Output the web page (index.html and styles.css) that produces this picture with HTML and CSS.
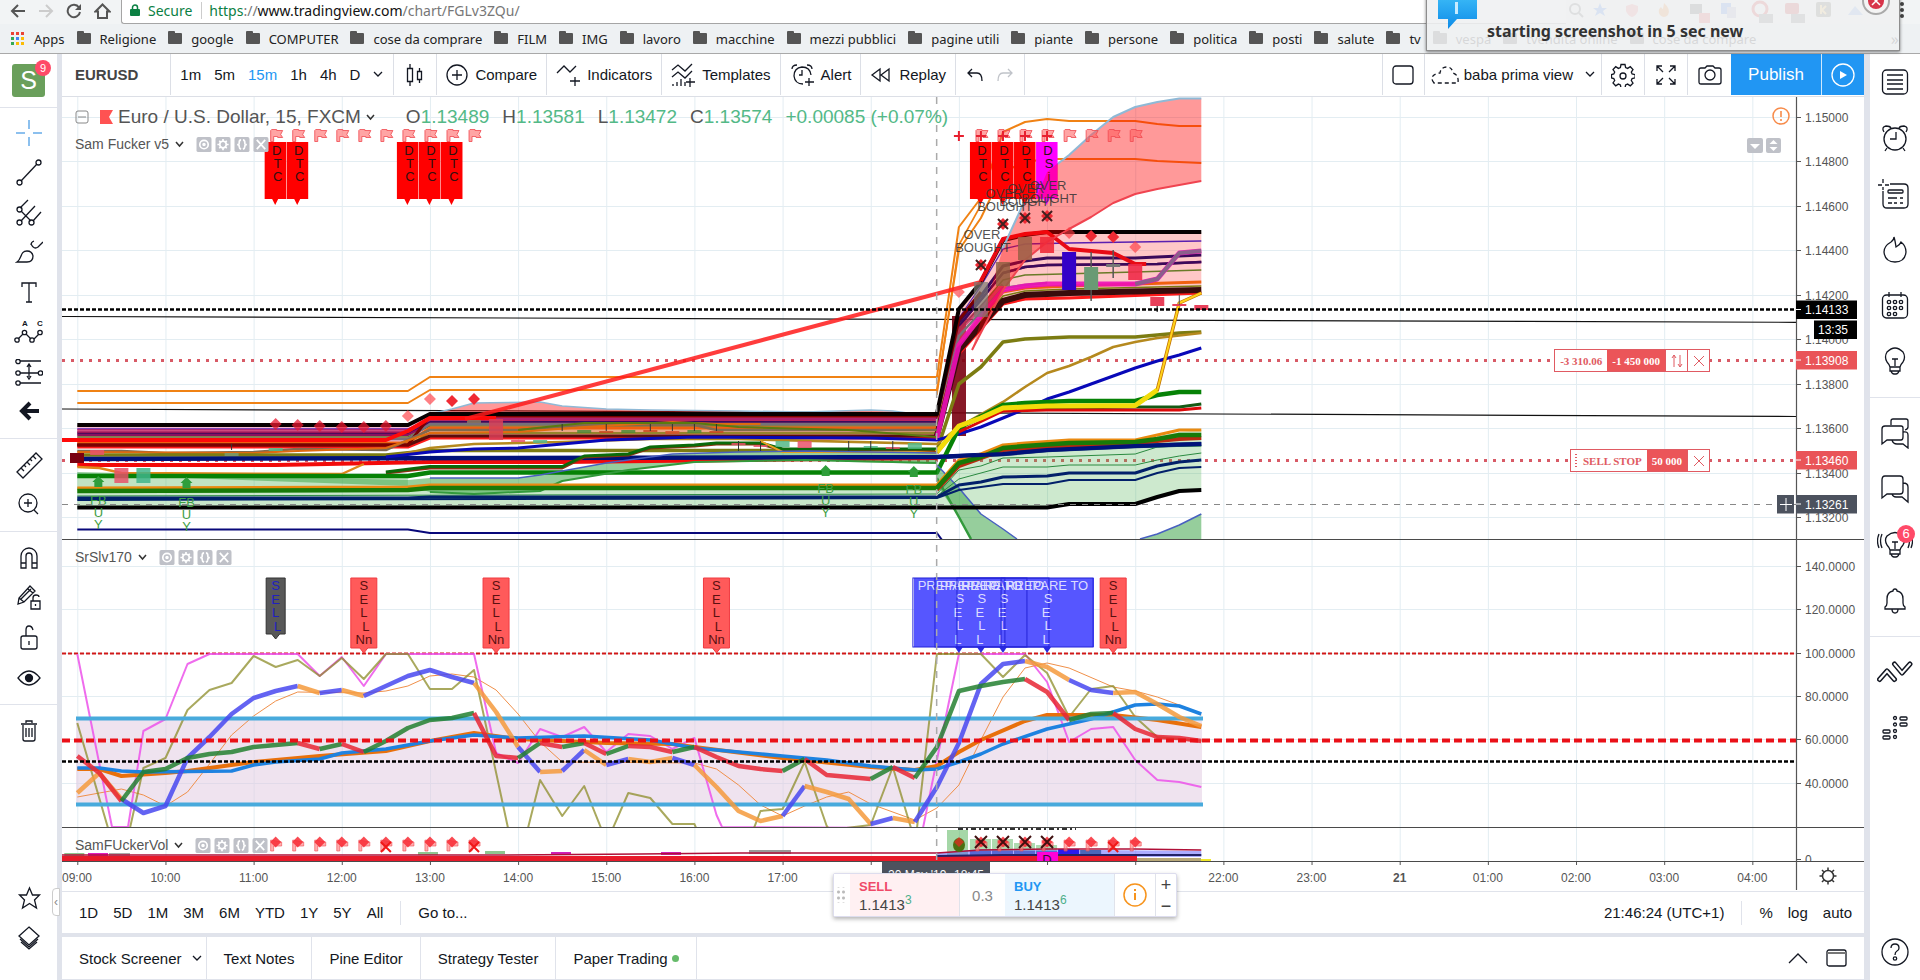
FILE: index.html
```html
<!DOCTYPE html>
<html lang="en">
<head>
<meta charset="utf-8">
<title>EURUSD chart</title>
<link rel="stylesheet" href="styles.css">
</head>
<body>
<div class="page">
  <header class="browser">
    <div class="address-row">
      <nav class="nav-icons">
        <button class="plain" aria-label="Back"><svg width="16" height="16" viewBox="0 0 16 16"><path d="M15 8H2M8 2L2 8l6 6" fill="none" stroke="#555" stroke-width="2"/></svg></button>
        <button class="plain" aria-label="Forward"><svg width="16" height="16" viewBox="0 0 16 16"><path d="M1 8h13M8 2l6 6-6 6" fill="none" stroke="#ccc" stroke-width="2"/></svg></button>
        <button class="plain" aria-label="Reload"><svg width="16" height="16" viewBox="0 0 16 16"><path d="M13 4.500A6.200 6.200 0 1 0 14 9" fill="none" stroke="#555" stroke-width="2"/><path d="M15 1v6H9z" fill="#555"/></svg></button>
        <button class="plain" aria-label="Home"><svg width="17" height="16" viewBox="0 0 17 16"><path d="M1.500 8.500L8.500 1.500l7 7H13V15H4V8.500z" fill="none" stroke="#555" stroke-width="2"/></svg></button>
      </nav>
      <div class="omnibox">
        <svg width="10" height="12" viewBox="0 0 10 12"><rect x="0" y="5" width="10" height="7" rx="1" fill="#0b8043"/><path d="M2.500 5V3.500a2.500 2.500 0 0 1 5 0V5" fill="none" stroke="#0b8043" stroke-width="1.500"/></svg>
        <span class="secure">Secure</span>
        <span class="url"><span class="green">https</span>://<span class="host">www.tradingview.com</span>/chart/FGLv3ZQu/</span>
      </div>
      <svg class="extensions" width="310" height="24" viewBox="0 0 310 24">
        <circle cx="9" cy="9" r="5" fill="none" stroke="#666" stroke-width="2"/><path d="M13 13l4 4" stroke="#666" stroke-width="2"/>
        <path d="M34 3l2 5h5l-4 3 2 5-5-3-5 3 2-5-4-3h5z" fill="#4285f4"/>
        <path d="M60 6l6-2 6 2v5q-2 5-6 6q-4-1-6-6z" fill="#f08080"/>
        <path d="M98 3q7 6 4 12q-4 4-8 0q-3-5 1-8q1 2 2 2z" fill="#f28b30"/>
        <rect x="124" y="4" width="12" height="10" fill="#555"/><rect x="133" y="13" width="11" height="10" fill="#e55"/>
        <rect x="155" y="3" width="10" height="11" fill="#4a86e8"/><rect x="161" y="7" width="9" height="11" fill="#aac"/>
        <circle cx="194" cy="9" r="7" fill="none" stroke="#d33" stroke-width="3"/><rect x="193" y="14" width="14" height="9" fill="#777"/>
        <rect x="219" y="3" width="14" height="11" rx="2" fill="#c33"/><rect x="225" y="14" width="14" height="9" fill="#777"/>
        <rect x="250" y="2" width="15" height="15" rx="2" fill="#665"/><path d="M255 5v9M260 6l-4 4 4 4" stroke="#fc6" stroke-width="2" fill="none"/>
        <path d="M282 15l7-9 8 9z" fill="#7aa7e8"/>
      </svg>
      <button class="plain dots" aria-label="Menu"><svg width="4" height="16" viewBox="0 0 4 16"><circle cx="2" cy="2" r="2" fill="#444"/><circle cx="2" cy="8" r="2" fill="#444"/><circle cx="2" cy="14" r="2" fill="#444"/></svg></button>
    </div>
    <nav class="bookmarks">
      <a href="#" class="apps"><svg width="14" height="14" viewBox="0 0 14 14"><path d="M0 0h3v3H0zM5 0h3v3H5zM10 0h3v3h-3z" fill="#ea4335"/><path d="M0 5h3v3H0z" fill="#34a853"/><path d="M5 5h3v3H5z" fill="#4285f4"/><path d="M10 5h3v3h-3zM10 10h3v3h-3zM5 10h3v3H5z" fill="#fbbc05"/><path d="M0 10h3v3H0z" fill="#34a853"/></svg>Apps</a>
      <a href="#"><i class="folder"></i>Religione</a><a href="#"><i class="folder"></i>google</a><a href="#"><i class="folder"></i>COMPUTER</a><a href="#"><i class="folder"></i>cose da comprare</a><a href="#"><i class="folder"></i>FILM</a><a href="#"><i class="folder"></i>IMG</a><a href="#"><i class="folder"></i>lavoro</a><a href="#"><i class="folder"></i>macchine</a><a href="#"><i class="folder"></i>mezzi pubblici</a><a href="#"><i class="folder"></i>pagine utili</a><a href="#"><i class="folder"></i>piante</a><a href="#"><i class="folder"></i>persone</a><a href="#"><i class="folder"></i>politica</a><a href="#"><i class="folder"></i>posti</a><a href="#"><i class="folder"></i>salute</a><a href="#"><i class="folder"></i>tv</a><a href="#"><i class="folder"></i>vespa</a><a href="#"><i class="folder"></i>tvendita online</a><a href="#"><i class="folder"></i>cose da compare</a>
      <span class="more">»</span>
    </nav>
    <div class="notice" role="status">
      <svg class="bubble" width="42" height="30" viewBox="0 0 42 30"><defs><linearGradient id="bub" x1="0" y1="0" x2="0" y2="1"><stop offset="0" stop-color="#35b4f5"/><stop offset="1" stop-color="#0d8be8"/></linearGradient></defs><path d="M1 0h39v19H20l-9 10v-10H1z" fill="url(#bub)"/><rect x="18" y="2" width="3" height="12" fill="#c8ebff"/></svg>
      <strong>starting screenshot in 5 sec new</strong>
      <button class="plain notice-close" aria-label="Close"><svg width="28" height="28" viewBox="0 0 28 28"><circle cx="14" cy="14" r="13" fill="#f4f4f4" stroke="#aaa" stroke-width="2"/><circle cx="14" cy="14" r="8" fill="#d8344a"/><path d="M10 10l8 8M18 10l-8 8" stroke="#fff" stroke-width="1.500"/></svg></button>
    </div>
  </header>

  <div class="app">
    <aside class="tools">
      <div class="avatar-box"><div class="avatar">S<span class="badge">9</span></div></div>
      <div class="group">
        <button aria-label="Crosshair"><svg width="28" height="28" viewBox="0 0 28 28"><path d="M14 1v9M14 18v9M1 14h9M18 14h9" stroke="#8cc0ee" stroke-width="2"/></svg></button>
        <button aria-label="Trend line"><svg width="28" height="28" viewBox="0 0 28 28"><path d="M6 22L22 5"/><circle cx="4.500" cy="23.500" r="2.500"/><circle cx="23.500" cy="3.500" r="2.500"/></svg></button>
        <button aria-label="Pitchfork"><svg width="28" height="28" viewBox="0 0 28 28"><path d="M5 9L13 1M6 22L20 7M18 22L26 13M6 12l10 10"/><circle cx="4.500" cy="10.500" r="2.500"/><circle cx="4.500" cy="23.500" r="2.500"/><circle cx="16.500" cy="23.500" r="2.500"/></svg></button>
        <button aria-label="Brush"><svg width="28" height="28" viewBox="0 0 28 28"><path d="M2 23C7 20 5 12 12 12q5 0 6 5q0 6-6 6zM16 5q3 6 7 3l5-5M19 2q-3 1-3 4"/></svg></button>
        <button aria-label="Text"><svg width="28" height="28" viewBox="0 0 28 28"><path d="M7 8V4h14v4M14 4v19M11 23h6"/></svg></button>
        <button aria-label="Pattern"><svg width="30" height="28" viewBox="0 0 30 28"><path d="M4 20l5-5M12 15l5 5M20 20l5-5"/><circle cx="3" cy="21" r="2.200"/><circle cx="10.500" cy="13.500" r="2.200"/><circle cx="18" cy="21" r="2.200"/><circle cx="26" cy="13.500" r="2.200"/><text x="8" y="7" class="tiny">A</text><text x="23" y="7" class="tiny">C</text></svg></button>
        <button aria-label="Forecast"><svg width="28" height="28" viewBox="0 0 28 28"><path d="M5 2h21M5 14h18M5 24h21M14 6v12M12 8l2-3 2 3M12 17l2 3 2-3"/><circle cx="3" cy="2.500" r="2.200"/><circle cx="3" cy="14" r="2.200"/><circle cx="25.500" cy="14" r="2.200"/><circle cx="3" cy="24" r="2.200"/></svg></button>
        <button aria-label="Back arrow"><svg width="28" height="28" viewBox="0 0 28 28"><path d="M24 12H9M15 4L7 12l8 8" stroke-width="4"/></svg></button>
      </div>
      <div class="group">
        <button aria-label="Ruler"><svg width="28" height="28" viewBox="0 0 28 28"><path d="M2 21L21 2l6 6L8 27zM6 17l3 3M9 14l2 2M12 11l3 3M15 8l2 2M18 5l3 3"/></svg></button>
        <button aria-label="Zoom"><svg width="28" height="28" viewBox="0 0 28 28"><circle cx="13" cy="12" r="9"/><path d="M9 12h8M13 8v8M19 19l4 4"/></svg></button>
      </div>
      <div class="group">
        <button aria-label="Magnet"><svg width="28" height="28" viewBox="0 0 28 28"><path d="M6 24V12a8 8 0 0 1 16 0v12h-5V12a3 3 0 0 0-6 0v12zM6 19h5M17 19h5"/></svg></button>
        <button aria-label="Draw lock"><svg width="28" height="28" viewBox="0 0 28 28"><path d="M3 20l1-6L15 2l5 5L9 18zM13 5l5 4M4 14l5 4M6 15L16 5M16 17h9v8h-9zM18 17v-3q0-3 3-3t3 2M20.500 20v2"/></svg></button>
        <button aria-label="Lock"><svg width="28" height="28" viewBox="0 0 28 28"><rect x="6" y="12" width="16" height="13" rx="2"/><path d="M11 12V6q0-4 3-4t4 4M14 17v4"/></svg></button>
        <button aria-label="Hide"><svg width="28" height="28" viewBox="0 0 28 28"><path d="M3 14q11-14 22 0q-11 14-22 0z"/><circle cx="14" cy="14" r="3.500" fill="#131722"/></svg></button>
      </div>
      <div class="group last">
        <button aria-label="Delete"><svg width="28" height="28" viewBox="0 0 28 28"><path d="M6 7h16M11 6V4h6v2M8 8v14q0 2 2 2h8q2 0 2-2V8M11 11v9M14 11v9M17 11v9"/></svg></button>
      </div>
      <div class="group bottom">
        <button aria-label="Favorites"><svg width="28" height="28" viewBox="0 0 28 28"><path d="M14.500 4l3 7h7l-5 5 2 8-7-4.500L7.500 24l2-8-5-5h7z"/></svg></button>
        <button aria-label="Objects"><svg width="28" height="28" viewBox="0 0 28 28"><path d="M14 3l10 9-10 9L4 12zM5 15l9 8 9-8M6 18l8 7 8-7"/></svg></button>
      </div>
    </aside>

    <main class="main">
      <div class="topbar">
        <button class="symbol">EURUSD</button>
        <div class="intervals"><button>1m</button><button>5m</button><button class="on">15m</button><button>1h</button><button>4h</button><button>D</button><button aria-label="More intervals"><svg width="10" height="8" viewBox="0 0 10 8"><path d="M1 1l4 4 4-4"/></svg></button></div>
        <button class="icon-only" aria-label="Chart type"><svg width="18" height="24" viewBox="0 0 18 24"><path d="M1.500 5.500h5v13h-5zM4 1v4M4 19v4M11.500 8.500h4v8h-4zM13.500 5v3M13.500 17v3"/></svg></button>
        <button class="labelled"><svg width="22" height="22" viewBox="0 0 22 22"><circle cx="11" cy="11" r="10"/><path d="M11 6v10M6 11h10"/></svg>Compare</button>
        <button class="labelled"><svg width="24" height="24" viewBox="0 0 24 24"><path d="M1 10l7-7 6 6 6-6M19 14v9M14 18h10"/></svg>Indicators</button>
        <button class="labelled"><svg width="24" height="24" viewBox="0 0 24 24"><path d="M1 7l6-5 7 6 7-7M1 14l6-5 7 6 7-7M2 21v2M6 19v4M10 16v7M14 19v4M19 15v9M15 19h9"/></svg>Templates</button>
        <button class="labelled"><svg width="24" height="24" viewBox="0 0 24 24"><path d="M13 21q-8 0-9-8q0-8 8-9q8 0 9 8M12 7v5H9M2 6q0-4 5-4M22 6q0-4-5-4M19 15v8M15 19h9"/></svg>Alert</button>
        <button class="labelled"><svg width="22" height="18" viewBox="0 0 22 18"><path d="M10 3v12L2 9zM19 3v12l-8-6z"/></svg>Replay</button>
        <div class="history"><button aria-label="Undo"><svg width="16" height="14" viewBox="0 0 16 14"><path d="M5 1L1 5l4 4M1 5h9q5 0 5 8"/></svg></button><button aria-label="Redo"><svg width="16" height="14" viewBox="0 0 16 14"><path d="M11 1l4 4-4 4M15 5H6Q1 5 1 13" stroke="#c0c3c9"/></svg></button></div>
        <span class="spacer"></span>
        <button class="icon-only" aria-label="Layout"><svg width="22" height="20" viewBox="0 0 22 20"><rect x="1" y="1" width="20" height="18" rx="3"/></svg></button>
        <button class="layout"><svg width="28" height="18" viewBox="0 0 28 18"><path d="M3 17q-5-6 2-9q2-1 4-1q1-6 7-6q5 0 6 6q6 2 5 10z" stroke-dasharray="4 3"/></svg>baba prima view<svg width="10" height="8" viewBox="0 0 10 8"><path d="M1 1l4 4 4-4"/></svg></button>
        <button class="icon-only" aria-label="Settings"><svg width="24" height="24" viewBox="0 0 24 24"><path d="M10 1.500h4l.6 3 2 .9 2.700-1.700 2.700 2.800-1.700 2.600.8 1.900 3 .6v3.300l-3 .6-.8 2 1.700 2.600-2.700 2.700-2.700-1.700-2 .9-.6 3h-4l-.6-3-2-.9-2.700 1.700L2 20l1.700-2.500-.9-2-2.300-.6v-3.300l2.300-.6.9-2L2 6.500l2.700-2.800 2.700 1.700 2-.9z"/><circle cx="12" cy="13" r="3"/></svg></button>
        <button class="icon-only" aria-label="Fullscreen"><svg width="20" height="20" viewBox="0 0 20 20"><path d="M1 6V1h5M1 1l6 6M14 1h5v5M19 1l-6 6M1 14v5h5M1 19l6-6M19 14v5h-5M19 19l-6-6"/></svg></button>
        <button class="icon-only noline" aria-label="Snapshot"><svg width="24" height="20" viewBox="0 0 24 20"><path d="M3 3h4l2-2h6l2 2h4q2 0 2 2v12q0 2-2 2H3q-2 0-2-2V5q0-2 2-2z"/><circle cx="12" cy="10" r="5"/></svg></button>
        <button class="publish">Publish</button>
        <button class="play" aria-label="Stream"><svg width="24" height="24" viewBox="0 0 24 24"><circle cx="12" cy="12" r="11" stroke="#fff"/><path d="M9 8v8l7-4z" fill="#fff" stroke="none"/></svg></button>
      </div>

      <section class="chart">
        <svg id="plot" viewBox="62 97 1802 793" preserveAspectRatio="xMinYMin meet"></svg>
        <div class="legend main-legend">
          <div class="title"><svg width="14" height="14" viewBox="0 0 14 14"><rect x="1" y="1" width="12" height="12" rx="2" fill="none" stroke="#888"/><path d="M3 7h8" stroke="#888"/></svg><svg width="13" height="14" viewBox="0 0 13 14"><path d="M0 0h13l-4 7 4 7H0z" fill="#ff5252"/></svg><span>Euro / U.S. Dollar, 15, FXCM</span><svg class="chev" width="9" height="7" viewBox="0 0 9 7"><path d="M1 1l3.500 4L8 1"/></svg>
          <span class="ohlc">O<b>1.13489</b></span><span class="ohlc">H<b>1.13581</b></span><span class="ohlc">L<b>1.13472</b></span><span class="ohlc">C<b>1.13574</b></span><b class="ohlc">+0.00085 (+0.07%)</b></div>
        </div>
        <div class="legend study one"><span>Sam Fucker v5</span><svg class="chev" width="9" height="7" viewBox="0 0 9 7"><path d="M1 1l3.500 4L8 1"/></svg><span class="mini" data-mini></span></div>
        <div class="legend study two"><span>SrSlv170</span><svg class="chev" width="9" height="7" viewBox="0 0 9 7"><path d="M1 1l3.500 4L8 1"/></svg><span class="mini" data-mini></span></div>
        <div class="legend study three"><span>SamFUckerVol</span><svg class="chev" width="9" height="7" viewBox="0 0 9 7"><path d="M1 1l3.500 4L8 1"/></svg><span class="mini" data-mini></span></div>

        <div class="order position"><span>-3 310.06</span><span class="solid">-1 450 000</span><button aria-label="Reverse"><svg width="12" height="14" viewBox="0 0 12 14"><path d="M3 13V1M1 4l2-3 2 3M9 1v12M7 10l2 3 2-3"/></svg></button><button aria-label="Close position"><svg width="12" height="12" viewBox="0 0 12 12"><path d="M1 1l10 10M11 1L1 11"/></svg></button></div>
        <div class="order stop"><span class="grip">SELL STOP</span><span class="solid">50 000</span><button aria-label="Cancel order"><svg width="12" height="12" viewBox="0 0 12 12"><path d="M1 1l10 10M11 1L1 11"/></svg></button></div>

        <div class="ticket">
          <span class="handle"></span>
          <button class="sell"><em>SELL</em><span>1.1413<sup>3</sup></span></button>
          <span class="spread">0.3</span>
          <button class="buy"><em>BUY</em><span>1.1413<sup>6</sup></span></button>
          <button class="info" aria-label="Info"><svg width="24" height="24" viewBox="0 0 24 24"><circle cx="12" cy="12" r="11"/><path d="M12 10v7M12 6v2" stroke-width="2"/></svg></button>
          <span class="steps"><button>+</button><button>−</button></span>
        </div>
      </section>

      <div class="rangebar">
        <button>1D</button><button>5D</button><button>1M</button><button>3M</button><button>6M</button><button>YTD</button><button>1Y</button><button>5Y</button><button>All</button>
        <span class="sep"></span><button>Go to...</button>
        <span class="spacer"></span>
        <span>21:46:24 (UTC+1)</span><span class="sep"></span><button>%</button><button>log</button><button>auto</button>
        <button class="drawer" aria-label="Hide toolbar">‹</button>
      </div>
      <div class="tabs">
        <button>Stock Screener<svg width="10" height="8" viewBox="0 0 10 8"><path d="M1 1l4 4 4-4"/></svg></button><button>Text Notes</button><button>Pine Editor</button><button>Strategy Tester</button><button>Paper Trading<i class="online"></i></button>
        <span class="spacer"></span>
        <button class="bare" aria-label="Open panel"><svg width="20" height="12" viewBox="0 0 20 12"><path d="M1 11l9-9 9 9"/></svg></button>
        <button class="bare" aria-label="Maximize panel"><svg width="21" height="18" viewBox="0 0 21 18"><rect x="1" y="1" width="19" height="16" rx="2"/><path d="M1 4h19" stroke="#777" stroke-width="2"/></svg></button>
      </div>
    </main>

    <aside class="widgets">
      <div class="group">
        <button aria-label="Watchlist"><svg width="28" height="28" viewBox="0 0 28 28"><rect x="1.500" y="2" width="25" height="24" rx="4"/><path d="M6 7h16M6 12h16M6 16h16M6 21h16"/></svg></button>
        <button aria-label="Alerts"><svg width="28" height="28" viewBox="0 0 28 28"><circle cx="14" cy="15" r="11"/><path d="M15 8v7H9M3 8Q0 3 5 2q4 0 5 2M25 8q3-5-2-6q-4 0-5 2M6 24l-2 3M22 24l2 3"/></svg></button>
        <button aria-label="News"><svg width="34" height="32" viewBox="0 0 34 32"><path d="M12 6h14q4 0 4 4v16q0 4-4 4H9q-4 0-4-4V13M0 7h4M7 7h4M5 1v4M5 9v3"/><rect x="10" y="12" width="15" height="3" rx="1"/><path d="M10 20h9M22 20h3M10 25h4M16 25h3M22 25h3"/></svg></button>
        <button aria-label="Hotlist"><svg width="28" height="28" viewBox="0 0 28 28"><path d="M13 1q1 3 2 10q4-2 5-5q5 4 5 10q-1 10-11 10q-10 0-11-10q0-6 7-10q3-2 3-5z"/></svg></button>
        <button aria-label="Calendar"><svg width="28" height="28" viewBox="0 0 28 28"><rect x="1.500" y="3" width="25" height="23" rx="4"/><path d="M8 0v5M20 0v5"/><g><circle cx="8" cy="10" r="1.700"/><circle cx="14" cy="10" r="1.700"/><circle cx="20" cy="10" r="1.700"/><circle cx="8" cy="16" r="1.700"/><circle cx="14" cy="16" r="1.700"/><circle cx="20" cy="16" r="1.700"/><circle cx="8" cy="22" r="1.700"/><circle cx="14" cy="22" r="1.700"/></g></svg></button>
        <button aria-label="Ideas"><svg width="28" height="30" viewBox="0 0 28 30"><path d="M9 20q-1-3-3-5Q3 10 6 5q8-8 16 0q3 5 0 10q-2 2-3 5zM9 20v4h10v-4M10 24q1 3 3 3h2q2 0 3-3M14 19v-7M11 12h6"/></svg></button>
      </div>
      <div class="group">
        <button aria-label="Public chats"><svg width="28" height="32" viewBox="0 0 28 32"><path d="M10 8V4q0-2 2-2h13q2 0 2 2v6q0 2-3 3M4 9h16q2 0 2 2v9q0 3-2 3H6l-5 4V12q0-3 3-3zM22 15q5-1 5 3v13l-5-4h-6q-4 0-5-4"/></svg></button>
        <button aria-label="Private chats"><svg width="28" height="30" viewBox="0 0 28 30"><path d="M4 2h15q3 0 3 3v12q0 3-3 3H6l-5 4V6q0-4 3-4zM22 9q5 0 5 4v15l-6-5h-6q-3 0-4-3"/></svg></button>
        <button aria-label="Idea stream"><svg width="36" height="30" viewBox="0 0 36 30"><path d="M13 20q-1-3-3-5Q7 10 10 6q8-7 16 0q3 4 0 9q-2 2-3 5zM13 20v4h10v-4M14 24q1 3 3 3h2q2 0 3-3M18 19v-7M15 12h6M5 4q-3 7 0 14M2 4q-3 7 0 14M31 4q3 7 0 14M34 4q3 7 0 14"/></svg><span class="badge">6</span></button>
        <button aria-label="Notifications"><svg width="28" height="28" viewBox="0 0 28 28"><path d="M4 22V20q2-1 2-4v-4q0-7 6-8q0-2 2-2t2 2q6 1 6 8v4q0 3 2 4v2zM11 22q0 4 3 4t3-4"/></svg></button>
      </div>
      <div class="group last">
        <button aria-label="Order panel"><svg width="36" height="22" viewBox="0 0 36 22"><path d="M2.500 18.500L10 10l7.500 8.500" stroke-width="5" stroke-linecap="round" stroke-linejoin="round"/><path d="M2.500 18.500L10 10l7.500 8.500" stroke="#fff" stroke-width="2" stroke-linecap="round"/><path d="M17.500 3L25 12l8-9" stroke-width="5" stroke-linecap="round" stroke-linejoin="round"/><path d="M17.500 3L25 12l8-9" stroke="#fff" stroke-width="2" stroke-linecap="round"/></svg></button>
        <button aria-label="Depth"><svg width="28" height="26" viewBox="0 0 28 26"><rect x="19" y="2" width="7" height="3" rx="1"/><rect x="19" y="8" width="7" height="3" rx="1"/><rect x="2" y="15" width="7" height="3" rx="1"/><rect x="2" y="21" width="7" height="3" rx="1"/><circle cx="14" cy="3" r="1.500"/><circle cx="14" cy="9.500" r="1.500"/><circle cx="14" cy="16" r="1.500"/><circle cx="14" cy="22" r="1.500"/></svg></button>
      </div>
      <div class="group bottom"><button aria-label="Help"><svg width="28" height="28" viewBox="0 0 28 28"><circle cx="14" cy="14" r="13"/><path d="M10 10q0-4 4-4t4 4q0 2-2 3t-2 4"/><circle cx="14" cy="20.500" r="1.700"/></svg></button></div>
    </aside>
  </div>
</div>
<script src="chart.js"></script>
</body>
</html>
```
FILE: styles.css
```css
* { box-sizing: border-box; }
body { margin: 0; font-family: "Liberation Sans", Arial, sans-serif; font-size: 15px; color: #131722; background: #fff; }
button { font: inherit; color: inherit; background: none; border: 0; padding: 0; margin: 0; display: flex; align-items: center; justify-content: center; }
.page { display: flex; flex-direction: column; min-height: 100vh; overflow: hidden; }
.spacer { flex: 1; }

.browser { position: relative; height: 54px; background: #eef1f3; border-bottom: 1px solid #a9a9a9; font-family: "Noto Sans", sans-serif; font-size: 13px; }
.address-row { display: flex; height: 24px; background: #f2f4f5; }
.nav-icons { display: flex; gap: 12px; align-items: center; height: 22px; padding: 0 10px 0 10px; }
.omnibox { flex: 1; display: flex; align-items: center; background: #fff; border: solid #a5a5a5; border-width: 0 0 1px 1px; border-radius: 0 0 0 3px; padding: 0 8px 3px; font-size: 14px; }
.secure { color: #0b8043; padding: 0 9px 0 8px; margin-right: 7px; border-right: 1px solid #ccc; line-height: 17px; }
.url { color: #777; }
.green { color: #0b8043; }
.host { color: #111; }
.extensions { margin-right: 24px; }
.dots { height: 20px; margin-right: 16px; }
.bookmarks { display: flex; align-items: center; gap: 12px; height: 29px; padding: 0 11px; white-space: nowrap; }
.bookmarks a { display: flex; align-items: center; gap: 9px; color: #222; text-decoration: none; }
.folder { width: 14px; height: 11px; background: #555; border-radius: 1px; position: relative; }
.folder::before { content: ""; position: absolute; left: 0; top: -2px; width: 7px; height: 4px; background: #555; border-radius: 1px; }
.more { margin-left: auto; padding-right: 10px; font-size: 16px; }
.notice { position: absolute; right: 20px; top: -4px; width: 474px; height: 55px; background: rgba(239, 240, 241, 0.88); border: 1px solid #8e8e8e; box-shadow: 0 1px 3px rgba(0, 0, 0, 0.5); display: flex; align-items: flex-end; padding: 0 0 9px 60px; font-size: 16px; color: #333; }
.notice strong { line-height: 20px; }
.bubble { position: absolute; left: 10px; top: 3px; }
.notice-close { position: absolute; right: 9px; top: -10px; }

.app { flex: 1; display: flex; background: #fff; }
.tools svg, .widgets svg, .topbar svg, .tabs svg { fill: none; stroke: #131722; stroke-width: 1.300; flex: none; }
.tools { width: 57px; flex: none; display: flex; flex-direction: column; }
.avatar-box { height: 54px; padding: 10px 12px; border-bottom: 1px solid #e0e3eb; }
.avatar { position: relative; width: 33px; height: 33px; background: #6a9f5b; color: #fff; border-radius: 3px; font-size: 25px; line-height: 33px; text-align: center; }
.badge { position: absolute; right: -6px; top: -4px; width: 16px; height: 16px; border-radius: 8px; background: #ff4a68; color: #fff; font-size: 11px; line-height: 16px; text-align: center; }
.group { padding: 6px 0; border-bottom: 1px solid #e0e3eb; }
.tools .group:nth-child(2) { padding: 5px 0; }
.tools button { width: 100%; height: 40px; }
.tools .tiny { font-size: 8px; font-weight: bold; fill: #131722; stroke: none; }
.group.last, .group.bottom { border-bottom: 0; }
.tools .group.bottom { margin-top: auto; padding-bottom: 22px; }
.widgets { width: 56px; flex: none; display: flex; flex-direction: column; border-left: 6px solid #e0e3eb; }
.widgets .group { padding: 0 0 7px; }
.widgets .group + .group { padding-top: 7px; }
.widgets button { position: relative; width: 100%; height: 56px; }
.widgets .badge { right: 5px; top: 8px; width: 18px; height: 18px; border-radius: 9px; font-size: 13px; line-height: 18px; }
.widgets .group.bottom { margin-top: auto; padding-bottom: 0; }

.main { flex: 1; min-width: 0; display: flex; flex-direction: column; border-left: 5px solid #e0e3eb; }
.topbar { display: flex; height: 43px; padding-bottom: 1px; border-bottom: 1px solid #dcdfe6; white-space: nowrap; }
.topbar > button, .topbar > div { border-right: 1px solid #dcdfe6; }
.symbol { padding: 0 32px 0 13px; font-weight: bold; color: #444; }
.intervals { display: flex; align-items: center; gap: 13px; padding: 0 10px 0 9px; }
.intervals .on { color: #2196f3; }
.icon-only { width: 43px; }
.labelled { gap: 7px; padding: 0 9px; }
.history { display: flex; gap: 14px; padding: 0 11px; }
.topbar > .icon-only.noline { border-right: 0; }
.history + .spacer + .icon-only { border-left: 1px solid #dcdfe6; }
.layout { gap: 5px; padding: 0 6px; }
.layout svg:last-child { margin-left: 7px; }
.topbar > .publish { width: 91px; background: #2196f3; color: #fff; font-size: 17px; border-color: #cfe8fc; }
.topbar > .play { width: 42px; background: #2196f3; border: 0; }

.chart { position: relative; flex: 1; min-height: 0; }
#plot { display: block; width: 100%; font-size: 12px; }
#plot .lbl { font-size: 13px; text-anchor: middle; }
.legend { position: absolute; left: 13px; display: flex; align-items: center; color: #555; white-space: nowrap; }
.legend b { font-weight: normal; color: #53b987; }
.chev { fill: none; stroke: #333; stroke-width: 1.500; }
.title { display: flex; align-items: center; font-size: 19px; gap: 5px; }
.title svg:first-child { margin-right: 6px; }
.ohlc { margin-left: 8px; }
.chev + .ohlc { margin-left: 26px; }
.main-legend { top: 9px; }
.study { font-size: 14px; gap: 6px; }
.one { top: 39px; }
.two { top: 452px; }
.three { top: 740px; }
.mini { display: flex; gap: 3px; margin-left: 6px; }
.order { position: absolute; right: 154px; display: flex; height: 23px; border: 1px solid #e05a62; background: #fff; color: #e05a62; font: bold 11px "Liberation Serif", serif; }
.order > * { display: flex; align-items: center; padding: 0 5px; }
.order .solid { background: #eb5559; color: #fff; }
.order button { width: 22px; padding: 0; border-left: 1px solid #e05a62; }
.order svg { fill: none; stroke: #e05a62; }
.position { top: 252px; }
.stop { top: 352px; }
.order .grip { padding-left: 12px; background: repeating-linear-gradient(#e05a62 0 1px, #fff 1px 3px) 4px 4px / 2px 14px no-repeat; }
.ticket { position: absolute; left: 771px; bottom: -26px; z-index: 2; display: flex; height: 44px; background: #fff; border: 1px solid #dde; border-radius: 2px; box-shadow: 0 2px 4px rgba(0, 0, 0, 0.3); color: #444; }
.handle { width: 16px; display: flex; background: radial-gradient(circle, #bbb 1px, transparent 2px) 4px 14px / 5px 6px; border: solid #fff; border-width: 13px 3px; }
.ticket button { border-right: 1px solid #e0e3eb; }
.sell, .buy { width: 110px; flex-direction: column; padding: 0 9px; line-height: 17px; }
.ticket .sell, .ticket .buy { align-items: flex-start; }
.ticket em { font-style: normal; font-size: 13px; font-weight: bold; color: #ef4a68; }
.ticket .buy em { color: #2196f3; }
.ticket .sell { background: #fff0f2; }
.ticket .buy { background: #ecf6fe; }
.ticket sup { font-size: 12px; line-height: 10px; color: #4caf8a; }
.spread { width: 45px; display: flex; align-items: center; justify-content: center; color: #888; }
.info { width: 41px; }
.info svg { fill: none; stroke: #f7941d; stroke-width: 1.500; }
.steps { width: 20px; display: flex; flex-direction: column; }
.ticket .steps button { flex: 1; border: 0; font-size: 18px; line-height: 18px; }
.steps button + button { border-top: 1px solid #e0e3eb; }
.rangebar { position: relative; display: flex; align-items: center; gap: 15px; height: 42px; padding: 0 12px 0 17px; border-top: 1px solid #e0e3eb; }
.sep { width: 1px; height: 24px; margin: 0 2px; background: #e0e3eb; }
.drawer { position: absolute; left: -10px; top: 0; width: 8px; height: 28px; margin-top: -4px; background: #fff; border: 1px solid #ccc; border-radius: 4px 0 0 4px; font-size: 12px; color: #888; }
.tabs { display: flex; height: 47px; border-top: 4px solid #e0e3eb; border-bottom: 1px solid #e0e3eb; }
.tabs button { padding: 0 17px; border-right: 1px solid #e0e3eb; }
.tabs button:first-child svg { margin: 2px -13px 0 10px; }
.online { width: 7px; height: 7px; border-radius: 4px; background: #66bb6a; margin-left: 4px; }
.tabs .bare { border: 0; padding: 0 9px; }
.tabs .bare:last-child { padding-right: 17px; }
```
FILE: chart.js
```js
const NS = 'http://www.w3.org/2000/svg';
const plot = document.getElementById('plot');
const X = i => 77.3 + 22.04 * i;
let layer = plot;
function el(tag, attrs, text) {
  const n = document.createElementNS(NS, tag);
  for (const k in attrs) n.setAttribute(k, attrs[k]);
  if (text !== undefined) n.textContent = text;
  layer.appendChild(n);
  return n;
}
// Points are "bar:y" or "xPixel:y" pairs.
function pts(s) {
  return s.trim().split(/\s+/).map(p => {
    const [a, y] = p.split(':');
    return (a[0] === 'x' ? +a.slice(1) : +X(+a).toFixed(1)) + ',' + y;
  }).join(' ');
}
const line = (s, c, w = 1, o = 1) => el('polyline', { points: pts(s), fill: 'none', stroke: c, 'stroke-width': w, 'stroke-opacity': o, 'stroke-linejoin': 'round' });
const area = (s, c, o = 1) => el('polygon', { points: pts(s), fill: c, 'fill-opacity': o });
const rect = (x, y, w, h, c, o = 1) => el('rect', { x, y, width: w, height: h, fill: c, 'fill-opacity': o });
const seg = (x1, y1, x2, y2, c, w = 1, dash = '', o = 1) => el('line', { x1, y1, x2, y2, stroke: c, 'stroke-width': w, 'stroke-dasharray': dash, 'stroke-opacity': o });
const label = (x, y, t, c, cls = 'lbl', o = 1) => el('text', { x, y, fill: c, class: cls, 'fill-opacity': o }, t);
function clip(id, y, h) {
  layer = plot;
  const c = el('clipPath', { id });
  layer = c;
  el('rect', { x: 62, y, width: 1734, height: h });
  layer = plot;
  layer = el('g', { 'clip-path': `url(#${id})` });
}

// Grid
const hours = [9, 10, 11, 12, 13, 14, 15, 16, 17, 18, 19, 20, 21, 22, 23, 24, 25, 26, 27, 28];
hours.forEach((h, k) => seg(X(k * 4) + 0.5, 97, X(k * 4) + 0.5, 861, '#e3edf2'));
const prices = [[117, '1.15000'], [161, '1.14800'], [206, '1.14600'], [250, '1.14400'], [295, '1.14200'], [339, '1.14000'], [384, '1.13800'], [428, '1.13600'], [473, '1.13400'], [517, '1.13200']];
const osc = [[566, '140.0000'], [609, '120.0000'], [653, '100.0000'], [696, '80.0000'], [739, '60.0000'], [783, '40.0000']];
[...prices, ...osc].forEach(p => seg(62, p[0] + 0.5, 1796, p[0] + 0.5, '#e3edf2'));

// Price pane
clip('pane1', 97, 442);
seg(62, 316.5, 1796, 322.3, '#111', 1.2);
seg(62, 409, 1796, 416.5, '#111', 1.2);
seg(62, 360.5, 1796, 360.5, '#d85a66', 3, '3 6');
seg(62, 460.5, 1796, 460.5, '#d85a66', 3, '3 6');

area('0:425 15:425 16:414 39:414 39:438 16:438 15:447 0:447', '#f08bb0', 0.6);
area('16:414 17:409 18:403 21:402 22:406 24:409 26:410 30:411 33:412 36:410 37:411 38:414 39:414 39:425 16:425', '#ff0000', 0.4);
line('16:414 17:409 18:403 21:402 22:406 24:409 26:410 30:411 33:412 36:410 37:411 38:414', '#8fb9d6', 1.5);
area('0:472 15:480 16:478 20:478 21:475 24:463 27:454 30:452 33:451 39:452 39:464 35:462 33:460 28:462 25:470 22:481 21:491 18:494 16:492 15:486 0:474', '#2e9d3a', 0.5);
area('0:487 39:486 39:508 0:508', '#4caf50', 0.3);
area('0:475 15:476 15:490 0:490', '#4caf50', 0.35);
area('16:430 20:430 23:424 28:424 39:430 39:437 16:437', '#e09a50', 0.6);

line('0:391 15:391 16:377 39:377 40:227 41:198 42:132 43:122 44:119 45:121 48:121 49:124 50:126 51:126', '#f08214', 2);
line('0:403 15:403 16:390 39:390 40:250 41:218 42:172 43:162 44:159 48:159 49:161 51:163', '#f08214', 2);
line('39:395 40:245 41:205', '#f08214', 1.6);
rect(952, 316, 14, 120, '#7a0010', 0.9);

// Bands of moving levels, from top down
const rise = (y0, y1, y2, ys, c, w, o) => line(`0:${y0} 15:${y0} 16:${y1} 39:${y1} ${ys}`, c, w, o);
area('39:414 40:309 41:282 42:240 44:232 51:232 51:295 44:297 42:304 40:352 39:438', '#ff7a7a', 0.42);
rise(429, 419, 0, '40:318 41:286 42:249 43:244 45:243 51:241', '#5a20b0', 1.3);
rise(433, 422, 0, '40:322 41:296 42:266 43:261 44:258 48:258 51:255', '#3a0a5a', 3);
rise(435, 424, 0, '40:326 41:300 42:273 43:267 44:265 49:264 51:262', '#8a1060', 2.4);
line('40:326 41:300 42:273 43:267 44:265 49:264 51:262', '#3a0a5a', 2.4);
rise(437, 426, 0, '40:330 41:306 42:280 43:275 48:272 51:270', '#6a7a28', 1.5);
rise(431, 419, 0, '40:330 42:285', '#c21858', 4, 0.7);
rise(439, 424, 0, '40:336 42:288 43:285 44:283', '#77707a', 2.4);
rise(443, 428, 0, '40:344 42:292 43:288 45:286 51:282', '#f06010', 3);
rise(445, 433, 0, '40:347 42:296 43:291 45:289 51:286', '#7a7a10', 1.5);
rise(447, 438, 0, '40:354 42:304 43:299 45:298 51:293', '#ff1a1a', 3);
rise(445, 436, 0, '', '#5a0c0c', 3);
line('39:436 40:350 42:301 43:295 45:293 51:290', '#3a0c0c', 6);
rise(445, 416, 0, '40:320 41:292', '#7a0000', 3);
rise(425, 414, 0, '40:309 41:282 42:240 43:235 44:232 51:232', '#080000', 4);
line('39:438 40:345 41:316 42:290 43:286 44:284 48:284 49:279 50:253 51:251', '#ee10b8', 5, 0.9);
line('48:284 49:279 50:253 51:251', '#7a6a84', 4, 0.85);
line('x62:440 14:440 15:431 16:418 19:418', '#ff0a0a', 4);
line('41:281 42:239 43:234 44:232 45:249 46:251 47:253 48:264 48.5:264', '#e80a14', 4);

line('0:451 2:451 4:453 8:452 10:449 14:450 16:430 20:430 23:425 28:425 29:430 39:430', '#806a50', 2.5);
line('0:452 8:453 10:451 14:448 16:433 20:432 23:427 27:422 29:424 31:424', '#e06a10', 2);
line('20:430 23:423 28:423 30:427 35:430 39:437', '#5a7a10', 2);
line('0:455 14:455 16:450.5 39:450.5 40:384 41:367 42:342 43:339 45:337 48:337 50:333 51:332', '#7c7c12', 3.5);
line('0:465 9:465 16:462 22:462 39:458', '#f20a0a', 4);
line('14:458 16:448 18:444 22:442 26:439 30:439 39:444 40:427 42:402 43:387 44:373 45:366 46:357 47:347 48:342 49:338 51:333', '#b5891e', 2.6);
line('0:459 39:457 40:456 42:454 44:450 48:446 51:444', '#00127a', 4.5);
line('14:457 16:452 18:449 20:448 24:440 28:437 36:438 39:440 40:434 41:427 42:418 43:409 44:399 45:392 46:384 47:376 48:368 49:361 50:355 51:348', '#0808b8', 3);
line('0:467 1:468 2:473 12:474 13:464', '#e0861a', 2.4);
line('14:473 16:468 22:468 23:457 25:455 26:448 28:446 29:444 31:444 32:450 39:451', '#8a3010', 3);
line('14:472 16:466.500 22:466.500 23:456 25:454 26:447 28:445 29:443 31:443 32:449 39:449', '#0a6a0a', 3);
line('31:441 32:452 38:452 39:453', '#e8a020', 2);
line('0:476 15:476 16:472.500 39:472.500 40:428 42:405 43:403 45:401 48:401 49:395 50:392 51:392', '#068206', 4.5);
line('42:409 48:407 50:407 51:404', '#145a14', 3);
line('40:432 42:411 44:410 50:410 51:408', '#dc0a0a', 3);
line('39:453 40:426 41:418 42:408 43:407 44:406 48:405.500 49:390 50:303 51:293', '#c07000', 3.5);
line('39:452 40:426 41:418 42:408 43:407 44:406 48:405.500 49:390', '#f2dc0a', 5);
line('49:390 50:303 51:293', '#ffd21a', 2);

area('39:486 40:464 42:448 44:443 48:441 50:432 51:430 51:490 50:491 49:497 48:504 45:504 44:508 39:508', '#4caf50', 0.28);
area('39:465 40:488 41:514 42:529 x1017:539 x971:539 40:517 39:485', '#2e9d3a', 0.5);
area('x1140:539 49:534 50:525 51:514 51:539', '#2e9d3a', 0.5);
line('39:465 40:488 41:514 42:529 x1017:539', '#4860c0', 1.5);
line('x1140:539 49:534 50:525 51:514', '#4860c0', 1.5);
line('39:478 40:517 x971:539', '#339a3c', 2.5);
line('16:478 20:478 21:475 24:463 27:454 30:452 33:451 39:453', '#4860c0', 1.4);
line('16:492 18:494 21:491 22:481 25:470 28:462 33:460 39:463', '#339a3c', 2);
line('0:488 15:487 16:485 39:485 40:460 41:454 42:445 43:443 45:440 48:440 49:435 50:430 51:430', '#ea8a10', 3);
line('39:490 40:466 42:450 44:447 48:443 50:439 51:438', '#b82a10', 4);
line('0:491 15:490 16:488 39:488 40:463 41:457 42:448 43:446 45:443 48:442 49:439 50:435 51:435', '#187a08', 4.5);
line('0:496 39:494 40:470 41:466 42:458 44:457 48:454 49:447 50:446 51:446', '#2a8a40', 1);
line('39:496 40:479 42:467 44:467 45:465 48:465 49:460 50:456 51:453', '#2a8a40', 1);
line('39:457 42:454 44:450 48:446 51:444', '#00127a', 4);
line('0:498 15:498 16:497 39:497 40:485 41:482 42:477 44:476 45:473 48:473 49:466 50:462 51:460', '#02206a', 3);
line('0:500 39:498 40:490 42:484 44:484 45:480 48:480 49:473 50:468 51:467', '#02206a', 2);
line('0:507.500 39:507.500 44:507.500 45:504 48:504 49:497 50:491 51:490', '#000', 4);
line('0:529.500 15:529.500 16:533 39:533 x942:540', '#08087a', 2);

// Candles before the spike
[[0.9, 450, 5, '#e8526a'], [2, 468, 15, '#e8526a'], [3, 468, 15, '#3fb58b'], [7, 453, 3, '#7a9a70'], [9, 448, 3, '#53b987'], [18, 420, 3, '#8a7a60'], [19, 419, 21, '#d84058'], [20, 440, 2, '#e8526a'], [21, 440, 3, '#53b987'], [23, 430, 3, '#4f8a3a'], [24, 431, 2, '#c84a20'], [25, 430, 3, '#4f8a3a'], [26, 430, 2, '#c84a20'], [27, 431, 3, '#d8502a'], [28, 430, 3, '#4f8a3a'], [29, 431, 2, '#c84a20'], [30, 443, 2, '#e8526a'], [31, 445, 2, '#e8526a'], [32, 441, 6, '#53b987'], [33, 441, 7, '#e8526a'], [36, 446, 2, '#53b987'], [37, 447, 2, '#e8526a'], [38, 443, 6, '#53b987']].forEach(([i, y, h, c]) => rect(X(i) - 7, y, 14, h, c, 0.85));

// Red cloud on the right
area('x972:350 42:248 43:200 44:172 45:155 46:135 47:117 48:107 49:102 50:98.500 51:98.500 51:181 49:189 48:194 47:203 46:217 45:229 44:242 43:260 42:290', '#ff0000', 0.4);
line('42:248 43:200 44:172 45:155 46:135 47:117 48:107 49:102 50:98.500 51:98.500', '#8fb9d6', 2);
line('x972:350 42:290 43:260 44:242 45:229 46:217 47:203 48:194 49:189 51:181', '#f04450', 2);
el('line', { x1: 465, y1: 419, x2: 981, y2: 282, stroke: '#ff1a1a', 'stroke-width': 4, 'stroke-opacity': 0.85 });
rect(70, 453, 14, 10, '#7a0010');
rect(X(41) - 7, 282, 14, 35, '#7a7a70', 0.7);
rect(X(42) - 7, 262, 14, 24, '#8a6040', 0.8);
rect(X(43) - 7, 237, 14, 23, '#a06048', 0.9);
rect(X(44) - 7, 237, 14, 16, '#f02a38', 0.9);
rect(X(45) - 7, 252, 14, 38, '#3400c8');
seg(X(46), 252, X(46), 301, '#555', 1.5); rect(X(46) - 7, 267, 14, 23, '#6a9a74');
seg(X(47), 250, X(47), 278, '#555', 1.5); rect(X(47) - 7, 264, 14, 3, '#777');
rect(X(48) - 7, 264, 14, 16, '#f02a48', 0.9);
seg(X(49), 297, X(49), 312, '#555', 1.5); rect(X(49) - 7, 297, 14, 9, '#e8405a');
rect(X(50) - 7, 304, 14, 2, '#e8405a'); seg(X(50), 295, X(50), 305, '#555');
rect(X(51) - 7, 305, 14, 5, '#e8405a');
[22, 24, 26, 27, 28, 29, 7].forEach(i => seg(X(i), i === 7 ? 444 : 424, X(i), i === 7 ? 450 : 431, '#333'));
[30, 31, 35, 36, 37].forEach(i => seg(X(i), 441, X(i), 451, '#333'));
seg(62, 309.5, 1796, 309.5, '#000', 2.4, '4 2');

const diamond = (x, y, c = '#f02a34', o = 1, r = 6) => el('path', { d: `M${x} ${y - r}l${r} ${r}l${-r} ${r}l${-r} ${-r}z`, fill: c, 'fill-opacity': o });
const cross = (x, y, c = '#402020', r = 5) => el('path', { d: `M${x - r} ${y - r}l${2 * r} ${2 * r}M${x + r} ${y - r}l${-2 * r} ${2 * r}`, stroke: c, 'stroke-width': 2 });
[[9, 424], [10, 425], [11, 426], [12, 427], [13, 427], [14, 426]].forEach(d => diamond(X(d[0]), d[1], '#e81830', 0.75));
[[15, 416], [16, 399], [40, 292], [45, 233], [48, 247]].forEach(d => diamond(X(d[0]), d[1], '#ff3a40', 0.65));
[[17, 401], [18, 399], [46, 236], [47, 237]].forEach(d => diamond(X(d[0]), d[1]));
[[41, 265], [42, 224], [43, 218], [44, 216]].forEach(d => { diamond(X(d[0]), d[1]); cross(X(d[0]), d[1]); });

const flag = (x, y, o = 0.55) => el('path', { d: `M${x - 5} ${y}v11h3v-5h4v1h5l-2-3l2-4h-6v-1h-5z`, fill: '#ff5a5a', 'fill-opacity': o, stroke: '#f04a50', 'stroke-opacity': 0.8 });
for (let i = 9; i < 19; i++) flag(X(i), 130.5);
for (let i = 41; i < 49; i++) flag(X(i), 130.5);
for (let i = 40; i < 45; i++) seg(X(i) - 5, 136, X(i) + 5, 136, '#e82030', 2), seg(X(i), 131, X(i), 141, '#e82030', 2);
function tag(i, letters, c) {
  const x = X(i);
  el('path', { d: `M${x - 11} 142h21.500v57h-8l-3 6l-3-6h-7.500z`, fill: c });
  [...letters].forEach((t, k) => label(x + (k ? 2 : 1), 155 + k * 13, t, '#301010'));
}
[9, 10, 15, 16, 17, 41, 42, 43].forEach(i => tag(i, 'DTC', '#ff0000'));
tag(44, 'DSi', '#ff00ff');
area('44:172 x1058:163 x1058:198 x1036:198', '#ff0000', 0.3);
[[41, 239], [42, 198], [43, 193], [44, 190]].forEach(([i, y]) => { label(X(i) + 1, y, 'OVER', '#333', 'lbl', 0.85); label(X(i) + 2, y + 13, 'BOUGHT', '#333', 'lbl', 0.85); });
[[1, 476, 505], [5, 477, 507], [34, 465, 493], [38, 466, 494]].forEach(([i, y, b]) => {
  const x = X(i) - 1;
  el('path', { d: `M${x} ${y}l6 6h-2v5h-8v-5h-2z`, fill: '#2f9e3b' });
  ['FB', 'U', 'Y'].forEach((t, k) => label(x, b + k * 12, t, '#3f9e45'));
});
seg(62, 504.5, 1796, 504.5, '#888', 1, '6 6');

// Oscillator pane
clip('pane2', 540, 287);
rect(76, 719, 1126, 86, '#e0c8e0', 0.5);
line('0:797 2:789 3:795 4:806 5:792 6:764 7:735 8:716 9:701 10:692 13:693 14:691 15:686 16:676 17:674 18:677 19:690 20:714 21:742 22:762 28:763 29:769 30:785 31:805 32:816 33:806 34:797 35:792 36:804 38:820 39:808 40:785 41:740 42:697 43:668 44:663 45:668 47:687 48:691 49:697 50:705 51:715', '#f0904a', 1);
seg(62, 653.5, 1796, 653.5, '#d01818', 2, '4 2');
line('0:654 x112:827 x128:827 3:731 4:719 5:664 6:654 10:654 11:676 12:657 13:686 14:654 18:654 19:753 20:763 21:729 22:737 23:727 24:752 25:734 26:736 27:749 28:738 29:815 x722:827 x923:828 39:760 40:654 43:654 44:682 45:742 46:729 47:727 48:760 49:780 50:782 51:787', '#ec52ea', 2, 0.85);
line('0:723 x108:828 x130:828 3:768 4:758 5:710 6:690 7:683 8:656 9:667 10:660 11:676 12:658 13:679 14:654 15:654 16:689 17:689 18:670 x508:828 x528:828 21:780 22:816 23:786 x601:828 x613:828 25:793 26:798 27:824 28:824 x697:830 x754:828 31:811 32:809 33:762 34:826 x830:830 36:825 37:767 x911:828 x917:828 39:654 41:654 42:677 43:655 44:673 45:717 46:689 47:686 48:717 49:737 50:739 51:741', '#8c8c28', 2, 0.75);
line('0:769 1:769 2:776 4:773 5:771 8:762 11:756 14:751 16:741 18:733 20:739 24:743 27:744 28:747 32:758 36:767 38:770 39:766 40:752 41:740 43:721 44:715 47:715 49:720 51:727', '#e8700c', 4);
line('0:768 1:768 2:771 3:772 7:771 8:765 9:762 11:759 12:753 14:749 16:741 18:735 20:738 23:736 26:740 28:748 32:756 34:760 36:766 38:770 39:769 40:762 41:754 42:744 44:729 46:719 48:705 49:704 50:706 51:714', '#1e82e0', 3.5);
seg(76, 718.5, 1203, 718.5, '#48aadc', 4);
seg(76, 804.5, 1203, 804.5, '#48aadc', 4);
// Each run is drawn in its own colour from the last point of the run before it.
const runs = list => list.forEach(([c, s]) => line(s, c, 4.5, 0.85));
const B = '#4848f0', O = '#f59a3c', G = '#238030', R = '#e82634';
runs([[O, '0:793 1:773 2:799'], [B, '2:799 3:813 4:806 5:758 6:737 7:714 8:698 9:691 10:686'], [O, '10:686 11:693'], [B, '11:693 12:690'], [O, '12:690 13:696'], [B, '13:696 14:686 15:676 16:670 17:677 18:683'], [O, '18:683 19:712 20:747'], [B, '20:747 21:772'], [O, '21:772 22:771'], [B, '22:771 23:750'], [O, '23:750 24:765'], [B, '24:765 25:759'], [O, '25:759 26:762 27:758'], [B, '27:758 28:765'], [O, '28:765 29:787 30:811 31:821 32:816'], [B, '32:816 33:786'], [O, '33:786 34:792 35:799 36:824'], [B, '36:824 37:818'], [O, '37:818 38:822'], [B, '38:822 39:787 40:743 41:684 42:664 43:661'], [O, '43:661 44:667 45:680'], [B, '45:680 46:690 47:693'], [O, '47:693 48:692 49:704 50:717 51:726']]);
runs([[R, '0:756 1:773 2:801'], [G, '2:801 3:772 4:769 5:758 6:754 7:752 8:747 9:745 10:743'], [R, '10:743 11:749'], [G, '11:749 12:744'], [R, '12:744 13:752'], [G, '13:752 14:741 15:728 16:720 17:718 18:713'], [R, '18:713 19:756 20:758'], [G, '20:758 21:743'], [R, '21:743 22:747'], [G, '22:747 23:743'], [R, '23:743 24:754'], [G, '24:754 25:746'], [R, '25:746 26:747 27:752'], [G, '27:752 28:747'], [R, '28:747 29:757 30:766 31:769 32:771'], [G, '32:771 33:759'], [R, '33:759 34:775 35:777 36:779'], [G, '36:779 37:767'], [R, '37:767 38:778'], [G, '38:778 39:747 40:691 41:686 42:682 43:679'], [R, '43:679 44:692 45:720'], [G, '45:720 46:714 47:713'], [R, '47:713 48:729 49:737 50:738 51:741']]);
seg(62, 740.5, 1796, 740.5, '#ea1018', 4, '8 4');
seg(62, 761.5, 1796, 761.5, '#000', 2.4, '4 2');
function sign(x, w, h, c, stroke, rows, ink) {
  el('path', { d: `M${x - w / 2} 578h${w}v${h}h${-w / 2 + 4}l-4 5l-4 -5h${-w / 2 + 4}z`, fill: c, stroke });
  rows.forEach((t, k) => label(x + (k === 3 ? 2 : 0), 590 + k * 13.5, t, ink));
}
sign(X(9), 19, 56, '#585858', '#333', ['S', 'E', 'L', 'L'], '#2020c0');
[13, 19, 29, 47].forEach(i => sign(X(i), 26, 70, '#ff5a5a', '#f03a40', ['S', 'E', 'L', 'L', 'Nn'], '#5a1010'));
rect(914, 578, 180, 69, '#5656ff');
[40, 41, 42, 44].forEach(i => {
  const x = X(i);
  el('rect', { x: x - 46, y: 578, width: 92, height: 69, fill: 'none', stroke: '#2424d8' });
  el('path', { d: `M${x - 4} 647h8l-4 6z`, fill: '#2a2ae0' });
  label(x, 590, 'PREPARE TO', '#dcdcff');
  ['S', 'E', 'L', 'L'].forEach((t, k) => label(x + (k % 2 ? -1 : 1), 603 + k * 13.5, t, '#dcdcff'));
});

// Volume pane
clip('pane3', 828, 33);
seg(958, 829, 1076, 829, '#333', 2, '5 3 2 3');
rect(947, 830, 21, 30, '#4caf50', 0.5);
[[41, 839], [42, 839], [43, 843], [44, 845]].forEach(([i, y]) => { rect(X(i) - 11, y, 21, 861 - y, '#4caf50', 0.45); rect(X(i) - 11, 851, 21, 6, '#5878a8'); });
rect(X(0) - 13, 853, 20, 3, '#8fc58f'); rect(88, 853, 20, 3, '#e020c0'); rect(109, 853, 21, 3, '#aaa');
rect(418, 852, 20, 3, '#8fc58f'); rect(485, 851, 20, 3, '#8fc58f'); rect(551, 852, 20, 3, '#d020b8'); rect(661, 852, 20, 3, '#d020b8'); rect(749, 850, 42, 4, '#999');
area('39:853 41:849 42:849 51:851 51:857 39:857', '#5a5aff', 0.5);
rect(X(45) - 11, 849, 21, 8, '#2a1af0'); rect(X(46) - 11, 850, 21, 8, '#4a66b8');
line('x62:855 x500:855 x640:854 x740:853 39:853 41:850 44:849 48:849 51:850', '#b01038', 1.5);
rect(62, 856, 1075, 5, '#e81a2a');
line('39:856 42:855 51:855', '#222268', 2);
rect(1137, 858, 64, 3, '#b8a878'); rect(1201, 859, 10, 2, '#f0e82a');
rect(X(44) - 10, 852, 21, 9, '#ff00d8'); label(X(44), 864, 'D', '#301030');
const marks = [9, 10, 11, 12, 13, 14, 15, 16, 17, 18, 41, 42, 43, 44, 45, 46, 47, 48];
marks.forEach(i => { el('path', { d: `M${X(i) - 5} 840v11h3v-5h8v-4z`, fill: '#ff7a7a', 'fill-opacity': 0.6, stroke: '#f04a50', 'stroke-opacity': 0.6 }); diamond(X(i), 842, '#f82a34', 0.85, 5.5); });
[14, 18, 47].forEach(i => cross(X(i), 847, '#f01818'));
[41, 42, 43, 44].forEach(i => cross(X(i), 842, '#401010', 6));
el('ellipse', { cx: 959, cy: 845, rx: 6, ry: 7, fill: '#4a7010' });
diamond(959, 842, '#d83020', 0.8, 5);

// Axes and pane borders
layer = plot;
seg(X(39) - 0.2, 97, X(39) - 0.2, 861, '#aaa', 1.5, '7 7');
[539.5, 827.5, 861.5].forEach(y => seg(62, y, 1864, y, '#4a4a4a', 1.2));
seg(1796.5, 97, 1796.5, 890, '#555', 1.2);
[...prices, ...osc].forEach(([y, t]) => { seg(1796, y + 0.5, 1801, y + 0.5, '#555'); el('text', { x: 1805, y: y + 5, fill: '#555' }, t); });
seg(1796, 859.5, 1801, 859.5, '#555');
layer = el('svg', { x: 1800, y: 850, width: 30, height: 11 });
el('text', { x: 5, y: 14, fill: '#555' }, '0');
layer = plot;
hours.forEach((h, k) => {
  const x = X(k * 4);
  seg(x + 0.5, 862, x + 0.5, 865, '#555');
  el('text', { x: k === 0 ? 77 : x, y: 882, fill: '#555', 'text-anchor': 'middle', 'font-weight': h === 24 ? 'bold' : 'normal' }, h === 24 ? '21' : String(h % 24).padStart(2, '0') + ':00');
});
rect(882, 862, 108, 24, '#4c525e');
el('text', { x: 888, y: 879, fill: '#fff' }, "20 May '19");
el('text', { x: 954, y: 879, fill: '#fff' }, '18:45');
function price(y, t, c, x = 1796) {
  rect(x, y - 9, 1857 - x, 18.5, c);
  if (x === 1796) seg(1796, y, 1801, y, '#fff');
  el('text', { x: x === 1796 ? 1805 : 1818, y: y + 4.5, fill: '#fff' }, t);
}
price(309.5, '1.14133', '#000');
price(329.5, '13:35', '#000', 1814);
price(360, '1.13908', '#e95458');
price(460, '1.13460', '#e95458');
price(504, '1.13261', '#4c525e');
rect(1777, 495, 17, 18.5, '#4c525e');
seg(1780, 504.5, 1792, 504.5, '#fff'); seg(1786, 498, 1786, 511, '#fff');
el('circle', { cx: 1781, cy: 116, r: 8, fill: 'none', stroke: '#f78b4a', 'stroke-width': 1.5 });
seg(1781, 111, 1781, 117, '#f78b4a', 1.6); seg(1781, 119, 1781, 121, '#f78b4a', 1.6);
el('rect', { x: 1747, y: 138, width: 16, height: 15, rx: 2, fill: '#bfc1c8' });
el('path', { d: 'M1750 144h10l-5 5z', fill: '#fff' });
el('rect', { x: 1766, y: 138, width: 15, height: 15, rx: 2, fill: '#bfc1c8' });
el('path', { d: 'M1769.500 144h8l-4-4zM1769.500 147h8l-4 4z', fill: '#fff' });
el('circle', { cx: 1828, cy: 876, r: 5.5, fill: 'none', stroke: '#333', 'stroke-width': 1.5 });
for (let a = 0; a < 8; a++) {
  const c = Math.cos(a * Math.PI / 4), s = Math.sin(a * Math.PI / 4);
  seg(1828 + 6 * c, 876 + 6 * s, 1828 + 8.5 * c, 876 + 8.5 * s, '#333', 1.5);
}

// Small study buttons
const glyphs = [
  ['Show', '<circle cx="8" cy="8" r="4.500"/><circle cx="8" cy="8" r="1"/>'],
  ['Format', '<circle cx="8" cy="8" r="3.500"/><path d="M8 2v3M8 11v3M2 8h3M11 8h3M4 4l2 2M12 4l-2 2M4 12l2-2M12 12l-2-2"/>'],
  ['Source', '<path d="M7 3Q5 3 5 6t-2 2q2 0 2 2t2 3M9 3q2 0 2 3t2 2q-2 0-2 2t-2 3"/>'],
  ['Remove', '<path d="M3.500 3l9 10M12.500 3l-9 10"/>']
];
document.querySelectorAll('[data-mini]').forEach(box => {
  box.innerHTML = glyphs.map(([n, g]) => `<button aria-label="${n}"><svg width="16" height="15" viewBox="0 0 16 16"><rect width="16" height="16" rx="2" fill="#bfc1c8"/><g fill="none" stroke="#fff" stroke-width="1.800">${g}</g></svg></button>`).join('');
});
```
